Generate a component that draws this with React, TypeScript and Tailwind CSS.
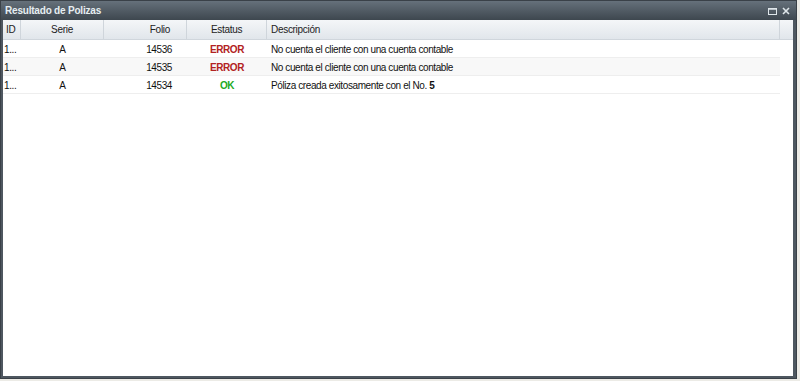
import React from "react";

const rows = [
  { id: "1...", serie: "A", folio: "14536", status: "ERROR", desc: "No cuenta el cliente con una cuenta contable", no: "" },
  { id: "1...", serie: "A", folio: "14535", status: "ERROR", desc: "No cuenta el cliente con una cuenta contable", no: "" },
  { id: "1...", serie: "A", folio: "14534", status: "OK", desc: "Póliza creada exitosamente con el No. ", no: "5" },
];

export default function App() {
  return (
    <div className="w-[800px] h-[381px] bg-[#ecebe6] overflow-hidden" style={{ fontFamily: '"Liberation Sans", Arial, sans-serif' }}>
      <div className="w-[797px] h-[379px] flex flex-col bg-[#4e5760] border border-[#3a4148]">
        {/* title bar */}
        <div className="h-[19px] flex items-center justify-between px-[4px] bg-gradient-to-b from-[#66717b] to-[#3e474f]">
          <span className="text-[10px] font-bold text-[#e6eef2] leading-none tracking-[-0.2px]">Resultado de Polizas</span>
          <div className="flex items-center gap-[5px] pr-[2px]">
            <svg width="9" height="8" viewBox="0 0 9 8"><rect x="0.5" y="1.5" width="8" height="6" fill="none" stroke="#dfe6ea" strokeWidth="1" /><line x1="0" y1="2" x2="9" y2="2" stroke="#dfe6ea" strokeWidth="1.5" /></svg>
            <svg width="8" height="8" viewBox="0 0 8 8"><path d="M1 1L7 7M7 1L1 7" stroke="#dfe6ea" strokeWidth="1.6" /></svg>
          </div>
        </div>
        {/* body */}
        <div className="flex-1 ml-[2px] mr-[3px] mb-[2px] bg-white flex flex-col">
          <div className="h-[20px] flex text-[10px] tracking-[-0.3px] text-[#222] bg-gradient-to-b from-[#f4f6f8] to-[#e1e6eb] border-b border-[#d0d6dc]">
            <div className="w-[18px] flex items-center pl-[3px] border-r border-[#cfd5db]">ID</div>
            <div className="w-[83px] flex items-center justify-center border-r border-[#cfd5db]">Serie</div>
            <div className="w-[83px] flex items-center justify-end pr-[16px] border-r border-[#cfd5db]">Folio</div>
            <div className="w-[80px] flex items-center justify-center border-r border-[#cfd5db]">Estatus</div>
            <div className="w-[513px] flex items-center pl-[4px] border-r border-[#cfd5db]">Descripción</div>
            <div className="flex-1" />
          </div>
          {rows.map((r, i) => (
            <div key={i} className={`w-[777px] h-[18px] pt-[2px] flex items-center text-[10px] tracking-[-0.4px] text-[#111] border-b border-[#eeeeee] ${i === 1 ? "bg-[#f8f8f8]" : "bg-white"}`}>
              <div className="w-[18px] pl-[1px]">{r.id}</div>
              <div className="w-[83px] text-center">{r.serie}</div>
              <div className="w-[83px] text-right pr-[15px] text-[#111]">{r.folio}</div>
              <div className={`w-[80px] text-center font-bold ${r.status === "OK" ? "text-[#22aa22]" : "text-[#b22222]"}`}>{r.status}</div>
              <div className="flex-1 pl-[4px]">
                {r.desc}
                {r.no && <span className="font-bold">{r.no}</span>}
              </div>
            </div>
          ))}
        </div>
      </div>
    </div>
  );
}
